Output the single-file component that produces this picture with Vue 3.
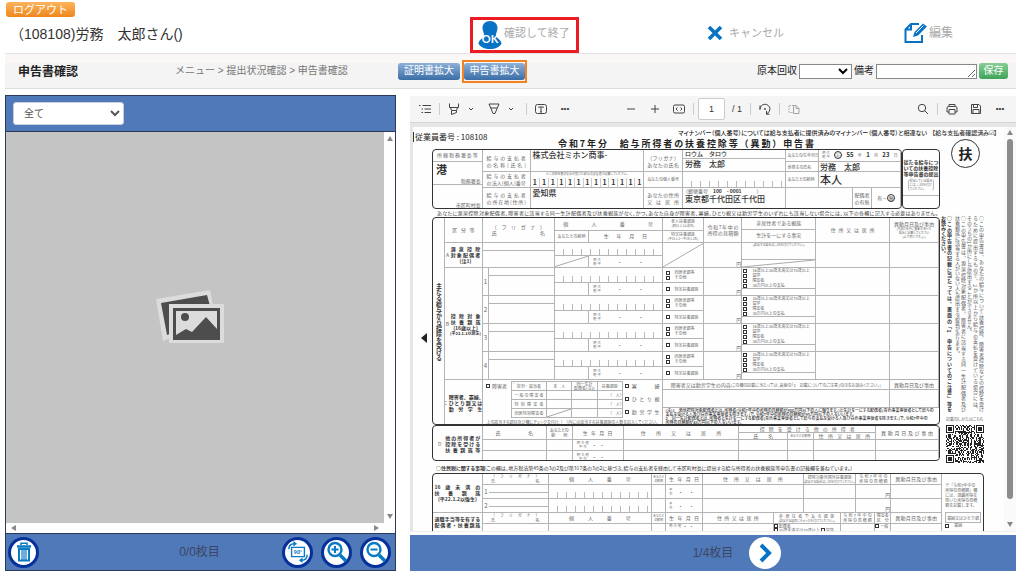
<script setup>
import { ref } from 'vue'

const filter = ref('all')
const collected = ref('')
const memo = ref('')
const page = ref('1')

const dependents = [1, 2, 3, 4]
const abroadReasons = ['16歳以上30歳未満又は70歳以上', '留学', '障害者', '38万円以上の支払']
const disability = ['一般の障害者', '特別障害者', '同居特別障害者']
const statuses = ['寡婦', 'ひとり親', '勤労学生']
const corporateNumber = '1111111111111'.split('')

const size = 33
function finder(x, y, ox, oy) {
  const dx = x - ox
  const dy = y - oy
  if (dx < -1 || dy < -1 || dx > 7 || dy > 7) return null
  if (dx < 0 || dy < 0 || dx > 6 || dy > 6) return false
  const d = Math.max(Math.abs(dx - 3), Math.abs(dy - 3))
  return d !== 2
}
let code = ''
let seed = 77
for (let y = 0; y < size; y++) {
  for (let x = 0; x < size; x++) {
    seed = (seed * 1103515245 + 12345) % 2147483648
    const f = [finder(x, y, 0, 0), finder(x, y, size - 7, 0), finder(x, y, 0, size - 7)].find((v) => v !== null)
    const on = f === undefined ? (seed >> 12) % 2 === 0 : f
    if (on) code += `M${x} ${y}h1v1h-1z`
  }
}
</script>

<template>
  <div class="app">
    <header class="top">
      <button class="logout" type="button">ログアウト</button>
      <div class="actions">
        <p class="user">（108108)労務　太郎さん()</p>
        <div>
          <button class="act finish" type="button">
            <svg width="24" height="28" viewBox="0 0 24 28">
              <path fill="#0872c4" d="M12 0c4.500 0 7.500 3 7.500 7 0 3-1.500 4.500-1.500 7 0 3.500 5 4 5.500 8.500C22 26 17.500 28 12 28S2 26 .5 22.500C1 18 6 17.500 6 14c0-2.500-1.500-4-1.500-7 0-4 3-7 7.500-7z" />
              <text x="12" y="22" text-anchor="middle" font-family="Lato, sans-serif" font-weight="bold" font-size="11" fill="#fff">OK</text>
            </svg>
            確認して終了
          </button>
        </div>
        <div>
          <button class="act cancel" type="button">
            <svg width="16" height="16" viewBox="0 0 16 16"><path d="M2 2l12 12M14 2L2 14" stroke="#0872c4" stroke-width="3.600" /></svg>
            キャンセル
          </button>
        </div>
        <div>
          <button class="act edit" type="button">
            <svg width="24" height="22" viewBox="0 0 24 22" fill="none">
              <path d="M15 2H7L1.500 7.500V20H18v-7M7 2v5.500H1.500" stroke="#0872c4" stroke-width="2" />
              <path d="M9 15l1.500-5L19 1.500l4 3L14 13.500z" fill="#0872c4" />
              <path d="M12 11l7.500-7.500" stroke="#fff" />
            </svg>
            編集
          </button>
        </div>
      </div>
    </header>

    <div class="titlebar">
      <h1>申告書確認</h1>
      <nav>メニュー &gt; 提出状況確認 &gt; 申告書確認</nav>
      <button class="blue" type="button">証明書拡大</button>
      <span class="picked"><button class="blue" type="button">申告書拡大</button></span>
      <form class="meta" @submit.prevent>
        <label for="collected">原本回収</label>
        <select id="collected" v-model="collected"><option value=""></option></select>
        <label for="memo">備考</label>
        <textarea id="memo" v-model="memo" rows="1"></textarea>
        <button class="save" type="submit">保存</button>
      </form>
    </div>

    <main class="work">
      <section class="proof">
        <div class="proof-head">
          <select v-model="filter" aria-label="絞り込み"><option value="all">全て</option></select>
        </div>
        <div class="proof-view">
          <div class="canvas">
            <svg width="70" height="58" viewBox="0 0 70 58">
              <path d="M0 9L54 0l4 20-44 28-7 3z" fill="#dcdcdc" />
              <path d="M5 13l46-8 3 11-40 2v26l-3 1z" fill="#4d4d4d" />
              <path d="M13 14h55v39H13z" fill="#dcdcdc" />
              <path d="M17 18h47v32H17z" fill="#4d4d4d" />
              <path d="M20 21h41v18L50 27 36 42l-6-3-10 6z" fill="#dcdcdc" />
              <circle cx="29" cy="27" r="4" fill="#4d4d4d" />
            </svg>
          </div>
          <div class="vbar"><i class="up"></i><i class="down"></i></div>
          <div class="hbar"><i class="left"></i><i class="right"></i></div>
        </div>
        <footer class="foot">
          <button class="round" type="button" aria-label="削除">
            <svg width="16" height="20" viewBox="0 0 16 20" fill="none" stroke="#0a7ac4"><path d="M1 4.500h14" stroke-width="2.500" /><path d="M5 3V1.200h6V3" stroke-width="1.500" /><path d="M3 7v11.500h10V7z" stroke-width="2" /><path d="M6 7v11M8 7v11M10 7v11" stroke-width="1.200" /></svg>
          </button>
          <span class="count">0/0枚目</span>
          <span class="tools">
            <button class="round" type="button" aria-label="回転">
              <svg width="22" height="22" viewBox="0 0 24 24" fill="none" stroke="#0a7ac4">
                <path d="M5 7h14v10H5z" stroke-width="1.500" />
                <text x="12" y="14" text-anchor="middle" font-family="Roboto, sans-serif" font-weight="bold" font-size="6" fill="#0a7ac4" stroke="none">90°</text>
                <path d="M2 9c0-4 2-6 6-6M22 15c0 4-2 6-6 6" stroke-width="1.600" />
                <path d="M7 0l4 3-4 3zM17 18l-4 3 4 3z" fill="#0a7ac4" stroke="none" />
              </svg>
            </button>
            <button class="round" type="button" aria-label="拡大">
              <svg width="22" height="22" viewBox="0 0 22 22" fill="none" stroke="#0a7ac4" stroke-width="2.400"><circle cx="9" cy="8.500" r="6.500" /><path d="M14 14l6 6" stroke-width="3.600" /><path d="M5.500 8.500h7M9 5v7" stroke-width="2" /></svg>
            </button>
            <button class="round" type="button" aria-label="縮小">
              <svg width="22" height="22" viewBox="0 0 22 22" fill="none" stroke="#0a7ac4" stroke-width="2.400"><circle cx="9" cy="8.500" r="6.500" /><path d="M14 14l6 6" stroke-width="3.600" /><path d="M5.500 8.500h7" stroke-width="2" /></svg>
            </button>
          </span>
        </footer>
      </section>

      <section class="report">
        <div class="toolbar">
          <button type="button" aria-label="目次"><svg width="12" height="12" viewBox="0 0 12 12"><path d="M3.500 2.500H12M5.500 6H12M5.500 9.500H12M0 2.500h1.500M2.500 6H4M2.500 9.500H4" /></svg></button>
          <hr />
          <button type="button" aria-label="強調表示"><svg width="12" height="12" viewBox="0 0 12 12"><path d="M1.500 .5v4h9v-4M2.500 4.500l1 3h5l1-3M3.500 7.500v4l5-2v-2" /></svg></button>
          <button class="chev" type="button" aria-label="強調色"><svg width="6" height="6" viewBox="0 0 6 6"><path d="M1 2l2 2 2-2" /></svg></button>
          <button type="button" aria-label="描画"><svg width="12" height="12" viewBox="0 0 12 12"><path d="M1 1h10L7 10.500H5zM3 5h6" /></svg></button>
          <button class="chev" type="button" aria-label="ペン色"><svg width="6" height="6" viewBox="0 0 6 6"><path d="M1 2l2 2 2-2" /></svg></button>
          <hr />
          <button type="button" aria-label="テキスト"><svg width="12" height="12" viewBox="0 0 12 12"><rect x=".5" y="1.500" width="11" height="9" rx="2" /><path d="M3.500 4.500V4h5v.5M6 4v5M5 9h2" /></svg></button>
          <button class="more" type="button" aria-label="その他">•••</button>
          <span class="mid">
            <button type="button" aria-label="縮小表示"><svg width="12" height="12" viewBox="0 0 12 12"><path d="M2 6h8" /></svg></button>
            <button type="button" aria-label="拡大表示"><svg width="12" height="12" viewBox="0 0 12 12"><path d="M2 6h8M6 2v8" /></svg></button>
            <button type="button" aria-label="幅に合わせる"><svg width="12" height="12" viewBox="0 0 12 12"><rect x=".5" y="2" width="11" height="8" rx="1.500" /><path d="M4.500 4.500L3 6l1.500 1.500M7.500 4.500L9 6 7.500 7.500" /></svg></button>
            <hr />
            <input v-model="page" aria-label="ページ" />
            <span class="total">/ 1</span>
            <hr />
            <button type="button" aria-label="回転"><svg width="12" height="12" viewBox="0 0 12 12"><path d="M1 6.500A5 5 0 0 1 11 6q0 3-3.500 5M7.500 8v3.200h3M1 2.500v4" /><circle cx="6" cy="6" r=".6" /></svg></button>
            <hr />
            <button class="off" type="button" aria-label="見開き"><svg width="12" height="12" viewBox="0 0 12 12"><path d="M5.500 2.500H1v7h4.500" stroke-dasharray="1.500 1" /><path d="M5.500 2.500v8h5.500v-5L8 2.500zM8 2.500v3h3" /></svg></button>
          </span>
          <span class="end">
            <button type="button" aria-label="検索"><svg width="12" height="12" viewBox="0 0 12 12"><circle cx="5" cy="5" r="3.700" /><path d="M7.500 7.500l3.500 3.500" /></svg></button>
            <hr />
            <button type="button" aria-label="印刷"><svg width="12" height="12" viewBox="0 0 12 12"><path d="M3 3.500V1.500h6v2M3 9H1V5q0-1.500 1.500-1.500h7Q11 3.500 11 5v4H9M3 6.500h6V11H3z" /></svg></button>
            <button type="button" aria-label="保存"><svg width="12" height="12" viewBox="0 0 12 12"><path d="M1.500 1.500h7.500l1.500 1.500v7.500h-9zM3.500 1.500v3h4v-3M3 10.500v-4h6v4" /></svg></button>
            <button class="more" type="button" aria-label="設定">•••</button>
          </span>
        </div>

        <div class="viewer">
          <article class="sheet">
            <header class="sheet-head">
              <span class="emp">従業員番号 : 108108</span>
              <span class="confirm">マイナンバー（個人番号）については給与支払者に提供済みのマイナンバー（個人番号）と相違ない<b>【給与支払者確認済み☑】</b></span>
              <strong class="form-title">令和7年分　給与所得者の扶養控除等（異動）申告書</strong>
            </header>

            <div class="sheet-body">
              <div class="nudge"><i></i></div>
              <div class="forms">
                <div class="ident">
                  <div class="box ident-main">
                    <div class="col office">
                      <div class="c"><span class="j">所轄税務署長等</span></div>
                      <div class="c stack"><b class="big">港</b><span class="end-text">税務署長</span></div>
                      <div class="c stack"><span class="end-text low">市区町村長</span></div>
                    </div>
                    <div class="col three">
                      <div class="c two"><span class="j">給与の支払者</span><span class="j">の名称(氏名)</span></div>
                      <div class="c two"><span class="j">給与の支払者</span><span class="j">の法人(個人)番号</span></div>
                      <div class="c two"><span class="j">給与の支払者</span><span class="j">の所在地(住所)</span></div>
                    </div>
                    <div class="col three">
                      <div class="c top-text"><b class="fill">株式会社ミホン商事-</b></div>
                      <div class="c number">
                        <small>※この申告書の提出を受けた給与の支払者が記載してください。</small>
                        <div class="digits"><b v-for="(n, i) in corporateNumber" :key="i">{{ n }}</b></div>
                      </div>
                      <div class="c top-text"><b class="fill">愛知県</b></div>
                    </div>
                    <div class="col three">
                      <div class="c two"><span class="j">（フリガナ）</span><span class="j">あなたの氏名</span></div>
                      <div class="c tiny"><span class="j">あなたの個人番号</span></div>
                      <div class="c two"><span class="j">あなたの住所</span><span class="j">又は居所</span></div>
                    </div>
                    <div class="col four">
                      <div class="c"><b class="kana">ロウム　タロウ</b></div>
                      <div class="c top-text"><b class="fill">労務　太郎</b></div>
                      <div class="c ticks"></div>
                      <div class="c stack addr"><span>（郵便番号　<b>100　- 0001</b>　　　）</span><b class="fill">東京都千代田区千代田</b></div>
                    </div>
                    <div class="col person">
                      <div class="c pair"><span>あなたの生年月日</span><span class="birth"><small>明・大<br />昭・平</small><i class="ring">㋹</i><b>55</b>年<b>1</b>月<b>23</b>日</span></div>
                      <div class="c pair"><span>世帯主の氏名</span><b class="fill">労務　太郎</b></div>
                      <div class="c pair"><span>あなたとの続柄</span><b class="self">本人</b></div>
                      <div class="c spouse"><span></span><span class="spouse-label">配偶者<br />の有無</span><span class="yesno">有・<i class="ring">無</i></span></div>
                    </div>
                  </div>
                  <div class="box second">
                    <b>従たる給与につ<br />いての扶養控除<br />等申告書の提出</b>
                    <small>提出している場合<br />には、○印を付け<br />てください。</small>
                  </div>
                </div>

                <p class="notice">あなたに源泉控除対象配偶者、障害者に該当する同一生計配偶者及び扶養親族がなく、かつ、あなた自身が障害者、寡婦、ひとり親又は勤労学生のいずれにも該当しない場合には、以下の各欄に記入する必要はありません。</p>

                <div class="box family">
                  <div class="spine">主たる給与から控除を受ける</div>
                  <div>
                    <div class="sec">
                      <div class="c"><span class="j wide">区分等</span></div>
                      <div class="r head">
                        <div class="c two name"><span class="j">（フリガナ）</span><span class="j">氏名</span></div>
                        <div class="c nums">
                          <div class="c"><span class="j">個人番号</span></div>
                          <div class="split"><span class="c tiny">あなたとの続柄</span><span class="c"><span class="j wide">生年月日</span></span></div>
                        </div>
                        <div class="c halves tiny"><span class="c lines">老人扶養親族<small>(昭31.1.1以前生)</small></span><span class="lines">特定扶養親族<small>(平15.1.2～平19.1.1生)</small></span></div>
                        <div class="c two"><span class="j">令和7年中の</span><span class="j">所得の見積額</span></div>
                        <div class="c halves"><span class="c">非居住者である親族</span><span>生計を一にする事実</span></div>
                        <div class="c"><span class="j wide">住所又は居所</span></div>
                        <div class="c two"><span class="j">異動月日及び事由</span><small>(令和7年中に異動があった<br />場合に記載してください<br />(以下同じです。)。)</small></div>
                      </div>
                    </div>
                    <div class="sec">
                      <div class="c label"><span>A</span><b><span class="j">源泉控除</span><span class="j">対象配偶者</span><span>(注1)</span></b></div>
                      <div class="r rowa">
                        <div class="c"><div class="ruby"></div></div>
                        <div class="c nums"><div class="c ticks"></div><div class="split"><span class="c"><svg class="diag" viewBox="0 0 100 100" preserveAspectRatio="none"><path d="M0 100L100 0" /></svg></span><span class="era"><small>明・大<br />昭・平</small><i>・</i><i>・</i></span></div></div>
                        <div class="c"><svg class="diag" viewBox="0 0 100 100" preserveAspectRatio="none"><path d="M0 100L100 0" /></svg></div>
                        <div class="c yen">円</div>
                        <div class="c fact"><small>(該当する場合は○印を付けてください。)</small><svg class="diag" viewBox="0 0 100 100" preserveAspectRatio="none"><path d="M0 100L100 0" /></svg></div>
                        <div class="c"></div>
                        <div class="c"></div>
                      </div>
                    </div>
                    <div class="sec">
                      <div class="c label"><span>B</span><b><span class="j">控除対象</span><span class="j">扶養親族</span><span>(16歳以上)</span><small>(平22.1.1以前生)</small></b></div>
                      <div>
                        <div v-for="n in dependents" :key="n" class="r rowb">
                          <div class="c numbered"><span class="c">{{ n }}</span><div class="ruby"></div></div>
                          <div class="c nums"><div class="c ticks"></div><div class="split"><span class="c"></span><span class="era"><small>明・大<br />昭・平</small><i>・</i><i>・</i></span></div></div>
                          <div class="c halves checks">
                            <span class="c"><label><input type="checkbox" />同居老親等</label><label><input type="checkbox" />その他</label></span>
                            <span><label><input type="checkbox" />特定扶養親族</label></span>
                          </div>
                          <div class="c yen">円</div>
                          <div class="c"><div class="abroad checks"><label v-for="t in abroadReasons" :key="t"><input type="checkbox" />{{ t }}</label></div></div>
                          <div class="c"></div>
                          <div class="c"></div>
                        </div>
                      </div>
                    </div>
                    <div class="sec rowc">
                      <div class="c label"><span>C</span><b><span class="j">障害者、寡婦、</span><span class="j">ひとり親又は</span><span class="j">勤労学生</span></b></div>
                      <div class="status">
                        <div class="c status-left">
                          <div class="status-main">
                            <label class="tickable"><input type="checkbox" />障害者</label>
                            <table>
                              <tbody>
                                <tr><th class="slash-down">区分　該当者</th><th>本　人</th><th>同一生計<br />配偶者(注2)</th><th>扶養親族</th></tr>
                                <tr v-for="(d, i) in disability" :key="d"><td><span class="j">{{ d }}</span></td><td><svg v-if="i === 2" class="diag" viewBox="0 0 100 100" preserveAspectRatio="none"><path d="M0 100L100 0" /></svg></td><td></td><td class="people">（　人）</td></tr>
                              </tbody>
                            </table>
                            <div class="statuses"><label v-for="s in statuses" :key="s"><input type="checkbox" /><span class="j">{{ s }}</span></label></div>
                          </div>
                          <small>上の該当する項目及び欄にチェックを付け、（　）内には該当する扶養親族の人数を記入してください。</small>
                        </div>
                        <div class="detail">
                          <div class="detail-head"><span class="c">障害者又は勤労学生の内容<small>(この欄の記載に当たっては、裏面の「2　記載についてのご注意」の⑶をお読みください。)</small></span><span class="c">異動月日及び事由</span></div>
                          <div class="detail-head"><span class="c"></span><span class="c"></span></div>
                          <b>(注)1　源泉控除対象配偶者とは、所得者(令和7年中の所得の見積額が900万円以下の人に限ります。)と生計を一にする配偶者(青色事業専従者として給与の<br />支払を受ける人及び白色事業専従者を除きます。)で、令和7年中の所得の見積額が95万円以下の人をいいます。<br />2　同一生計配偶者とは、所得者と生計を一にする配偶者(青色事業専従者として給与の支払を受ける人及び白色事業専従者を除きます。)で、令和7年中の<br />所得の見積額が48万円以下の人をいいます。</b>
                        </div>
                      </div>
                    </div>
                  </div>
                </div>

                <div class="box others">
                  <div class="c label"><span>D</span><b><span class="j">他の所得者が</span><span class="j">控除を受ける</span><span class="j">扶養親族等</span></b></div>
                  <div>
                    <div class="d-row">
                      <span class="c"><span class="j wide">氏名</span></span><span class="c tiny">あなたとの<br />続　　柄</span><span class="c"><span class="j wide">生年月日</span></span><span class="c"><span class="j address">住所又は居所</span></span>
                      <div class="c halves taxpayer"><span class="c"><span class="j address">控除を受ける他の所得者</span></span><div class="tax-cols"><span class="c">氏　　名</span><span class="c"><small>あなたとの続柄</small></span><span><span class="j">住所又は居所</span></span></div></div>
                      <span class="c"><span class="j">異動月日及び事由</span></span>
                    </div>
                    <div v-for="n in 2" :key="n" class="d-row entry">
                      <span class="c"></span><span class="c"></span><span class="c era"><small>明・大・昭<br />平・令</small><i>・</i><i>・</i></span><span class="c"></span>
                      <div class="c tax-cols"><span class="c"></span><span class="c"></span><span></span></div><span class="c"></span>
                    </div>
                  </div>
                </div>
              </div>

              <aside class="side">
                <div class="seal">扶</div>
                <div class="guide">
                  <p><span class="full">○この申告書は、あなたの給与について扶養控除、障害者控除などの控除を受け</span><span class="full">るために提出するもので、2か所以上から給与の支払を受けている場合には、</span><span>そのうちの1か所にしか提出することができません。</span></p>
                  <p><span class="full">○この申告書は、源泉控除対象配偶者、障害者に該当する同一生計配偶者及び</span><span>扶養親族に該当する人がいない人も提出する必要があります。</span></p>
                  <p class="strong"><span class="full">○この申告書の記載に当たっては、裏面の「1　申告についてのご注意」等を</span><span>お読みください。</span></p>
                </div>
                <small>記載のしかたはこちら</small>
                <svg class="qr" :viewBox="`0 0 ${size} ${size}`" shape-rendering="crispEdges"><path :d="code" fill="#222" /></svg>
              </aside>
            </div>

            <p class="resident"><b>○住民税に関する事項</b>(この欄は、地方税法第45条の3の2及び第317条の3の2に基づき、給与の支払者を経由して市区町村長に提出する給与所得者の扶養親族等申告書の記載欄を兼ねています。)</p>

            <div class="box local">
              <div class="l-label">
                <div class="c"><b><span class="j">16歳未満の</span><span class="j">扶養親族</span><span>(平22.1.2以後生)</span></b></div>
                <div class="c"><b><span class="j">退職手当等を有する</span><span class="j">配偶者・扶養親族</span></b></div>
              </div>
              <div>
                <div class="l-row">
                  <span class="c two name"><span class="j">（フリガナ）</span><span class="j">氏名</span></span><span class="c"><span class="j wide">個人番号</span></span><span class="c rel"><small>あなたと<br />の続柄</small></span><span class="c"><span class="j">生年月日</span></span><span class="c"><span class="j wide">住所又は居所</span></span><span class="c two"><span class="j">控除対象外国外扶養親族</span><small>(該当する場合は○印を付けてください。)</small></span><span class="c two"><span class="j">令和7年中の</span><span class="j">所得の見積額</span></span><span class="c"><span class="j">異動月日及び事由</span></span>
                </div>
                <div v-for="n in 2" :key="n" class="l-row entry">
                  <span class="c numbered"><span>{{ n }}</span><i class="ruby"></i></span><span class="c ticks"></span><span class="c"></span><span class="c era"><small>平<br />令</small><i>・</i><i>・</i></span><span class="c"></span><span class="c"></span><span class="c yen">円</span><span class="c"></span>
                </div>
                <div class="l-row last">
                  <span class="c two name"><span class="j">（フリガナ）</span><span class="j">氏名</span></span><span class="c"><span class="j wide">個人番号</span></span><span class="c rel"><small>あなたと<br />の続柄</small></span><span class="c"><span class="j">生年月日</span></span><span class="c"><span class="j wide">住所又は居所</span></span><span class="c two"><span class="j">非居住者である親族</span><small>(該当する項目にチェックを付けてください。)</small></span><span class="c two"><span class="j">令和7年中の</span><span class="j">所得の見積額</span></span><span class="c tiny">障害者<br />区　分</span><span class="c"><span class="j">異動月日及び事由</span></span>
                </div>
                <div class="l-row last entry">
                  <span class="c"><i class="ruby"></i></span><span class="c"></span><span class="c"></span><span class="c era"><small>明・大・昭</small><i>・</i><i>・</i></span><span class="c"></span><span class="c checks"><label><input type="checkbox" />配偶者</label><label><input type="checkbox" />30歳未満又は70歳以上 <input type="checkbox" />留学</label></span><span class="c"></span><span class="c checks"><label><input type="checkbox" />一般</label></span><span class="c"></span>
                </div>
              </div>
              <div class="l-side">
                <p>※「令和7年中の<br />所得の見積額」欄<br />には、退職所得を<br />除いた所得の見積<br />額を記載します。</p>
                <div><span class="c">寡婦又はひとり親</span><span class="checks"><label><input type="checkbox" />寡婦</label></span></div>
              </div>
            </div>
          </article>
          <div class="thumb-track"><i class="up"></i><b></b><i class="down"></i></div>
        </div>
        <footer class="foot pager">
          <span>1/4枚目</span>
          <button type="button" aria-label="次へ"><svg width="32" height="32" viewBox="0 0 32 32"><path d="M12 8l8 8-8 8" fill="none" stroke="#0872c4" stroke-width="4" /></svg></button>
        </footer>
      </section>
    </main>
  </div>
</template>

<style>
html, body { margin: 0; background: #fff; }
</style>

<style scoped>
* { box-sizing: border-box; }
.app { display: flex; flex-direction: column; height: 100vh; padding-bottom: 3px; font-family: "Liberation Sans", "Noto Sans CJK JP", sans-serif; color: #333; overflow: hidden; }
button, select, input, textarea { font-family: inherit; margin: 0; }
p, h1 { margin: 0; }
i { font-style: normal; }

.top { padding-top: 2px; }
.logout { display: block; margin-left: 6px; width: 69px; height: 15px; padding: 0; border: 0; border-radius: 3px; background: linear-gradient(#fcb45c, #f0861c); color: #fff; font-size: 11px; line-height: 14px; }
.actions { display: grid; grid-template-columns: 470fr 237fr 197fr 120fr; height: 36px; }
.user { padding-left: 10px; font-size: 14px; line-height: 34px; }
.act { display: flex; align-items: center; padding: 0; border: 0; background: none; color: #aaa; font-size: 11px; line-height: 16px; height: 30px; white-space: nowrap; }
.finish { height: 36px; width: 109px; gap: 2px; padding: 0 0 4px 5px; border: 3px solid #ec1c24; }
.finish svg { margin-top: 4px; }
.cancel { gap: 6px; height: 32px; }
.edit { gap: 1px; font-size: 12px; height: 32px; }

.titlebar { display: flex; align-items: center; height: 36px; margin: 0 8px 0 5px; padding: 0 8px 0 13px; border-top: 1px solid #e2e2e2; border-bottom: 1px solid #ddd; background: linear-gradient(#faf7f6 9px, #f4f4f4 9px); }
h1 { flex: 0 0 157px; padding-top: 2px; font-size: 12px; line-height: 16px; color: #222; }
nav { flex: 0 0 223px; font-size: 10px; line-height: 14px; color: #777; white-space: nowrap; }
.blue { height: 17px; width: 62px; padding: 0; border: 0; border-radius: 3px; background: linear-gradient(#8db1d8, #3a6da6); color: #fff; font-size: 10px; line-height: 14px; }
.picked { display: flex; margin-left: 2px; border: 2px solid #f58220; padding: 1px 0; }
.picked .blue { width: 61px; }
.meta { display: flex; align-items: center; gap: 2px; margin-left: auto; font-size: 10px; line-height: 14px; color: #222; }
.meta select { width: 53px; height: 15px; padding: 0; border: 1px solid #888; border-radius: 0; background: #fff; }
.meta textarea { width: 101px; height: 15px; padding: 0; border: 1px solid #888; resize: both; overflow-y: scroll; font-size: 10px; }
.save { width: 29px; height: 16px; padding: 0; border: 0; border-radius: 3px; background: linear-gradient(#86cd94, #3fa45a); color: #fff; font-size: 10px; line-height: 14px; }

.work { flex: 1; min-height: 0; display: grid; grid-template-columns: 391fr 606fr; gap: 14px; margin: 6px 8px 0 5px; }
.proof { display: flex; flex-direction: column; min-height: 0; border: 1px solid #2c3a58; }
.proof-head { padding: 6px 7px; height: 36px; background: #5079b9; border-bottom: 1px solid #2c3a58; }
.proof-head select { width: 111px; height: 23px; padding: 0 0 0 6px; border: 1px solid #ccd; border-radius: 3px; background: #fff; color: #555; font-size: 10px; }
.proof-view { flex: 1; min-height: 0; display: grid; grid-template-columns: 1fr 11px; grid-template-rows: 1fr 10px; background: #fefefe; }
.canvas { display: flex; align-items: center; justify-content: center; background: #c4c4c4; padding: 0 8px 18px 0; }
.vbar { display: flex; flex-direction: column; align-items: center; justify-content: space-between; padding: 4px 0; }
.hbar { display: flex; align-items: center; justify-content: space-between; padding: 0 5px; }
.up, .down, .left, .right { width: 0; height: 0; border: 3px solid transparent; }
.up { border-bottom: 5px solid #888; border-top: 0; }
.down { border-top: 5px solid #888; border-bottom: 0; }
.left { border-right: 5px solid #888; border-left: 0; }
.right { border-left: 5px solid #888; border-right: 0; }
.foot { display: grid; grid-template-columns: 1fr auto 1fr; align-items: center; flex: 0 0 37px; background: #5079b9; border-top: 1px solid #2c3a58; padding: 0 4px 0 2px; color: #3c4662; font-size: 12px; }
.round { display: flex; align-items: center; justify-content: center; width: 31px; height: 31px; padding: 0; border: 3px solid #06319a; border-radius: 50%; background: #fff; }
.tools { display: flex; justify-content: flex-end; gap: 8px; }
.count { padding-bottom: 3px; }
.report { display: flex; flex-direction: column; min-width: 0; min-height: 0; padding-top: 1px; }
.pager { display: flex; justify-content: center; gap: 16px; flex-basis: 36px; border: 0; padding: 0 0 0 48px; }
.pager button { width: 32px; height: 32px; padding: 0; border: 0; border-radius: 50%; background: #fff; }
.pager span { padding-bottom: 4px; }

.toolbar { display: flex; align-items: center; flex: 0 0 27px; padding: 0 10px 0 9px; background: #f5f5f5; border-bottom: 1px solid #d6d6d6; }
.toolbar button { display: flex; padding: 0; border: 0; background: none; color: #333; }
.toolbar svg { fill: none; stroke: #444; stroke-width: 1; }
.toolbar hr { width: 1px; height: 12px; margin: 0 8px; border: 0; background: #ccc; }
.toolbar .chev { margin: 0 14px 0 8px; }
.toolbar .chev + hr { margin-left: -2px; }
.toolbar .more { font-size: 8px; line-height: 10px; width: 12px; justify-content: center; margin-left: 12px; }
.mid { display: flex; align-items: center; margin-left: 54px; }
.mid button + button { margin-left: 12px; }
.mid input { width: 27px; height: 22px; margin-left: -4px; padding: 0; border: 1px solid #ccc; border-radius: 2px; text-align: center; font-size: 9px; background: #fff; color: #333; }
.total { margin-left: 7px; font-size: 9px; }
.mid .off { opacity: .45; }
.end { display: flex; align-items: center; margin-left: auto; }
.end button + button { margin-left: 12px; }

.viewer { flex: 1; min-height: 0; display: grid; grid-template-columns: 1fr 12px; margin-bottom: 3px; padding: 4px 0 0 3px; background: #e6e6e6; overflow: hidden; border-bottom: 1px solid #eee; }
.thumb-track { display: flex; flex-direction: column; align-items: center; justify-content: space-between; background: #fafafa; padding: 3px 0 4px; }
.thumb-track b { flex: 0 1 360px; width: 6px; margin: 4px 0 auto; border-radius: 3px; background: #8c8c8c; }

.sheet { min-height: 0; min-width: 0; overflow: hidden; background: #fefefe; color: #666; font-size: 5px; line-height: 6px; font-family: "Noto Sans CJK JP", sans-serif; }
.sheet b { color: #333; }
.sheet small { font-size: 3px; line-height: 4px; font-feature-settings: "palt"; }
.sheet-head { display: grid; grid-template-columns: 145fr 256fr 190fr; grid-template-rows: 11px 11px; align-items: center; color: #222; }
.emp { grid-row: span 2; padding-left: 1px; font-size: 8px; line-height: 10px; white-space: nowrap; border-left: 1px solid #333; height: 10px; margin: 0 auto 2px 0; }
.confirm { grid-column: span 2; justify-self: end; padding-right: 7px; font-size: 6px; line-height: 8px; font-feature-settings: "palt"; white-space: nowrap; font-weight: 500; }
.confirm b { margin-left: 5px; font-weight: 500; }
.form-title { grid-column: 2; font-size: 9px; line-height: 10px; text-align-last: justify; white-space: nowrap; }
.sheet-body { display: grid; grid-template-columns: 19fr 508fr 64fr; }
.sheet-body > *, .forms > * { min-width: 0; }
.nudge { padding: 184px 5px 0 0; display: flex; justify-content: flex-end; align-items: flex-start; }
.nudge i { border: 5px solid transparent; border-left: 0; border-right: 6px solid #222; }

.box { border: 1px solid #333; border-radius: 4px; overflow: hidden; }
.c { display: flex; align-items: center; justify-content: center; min-width: 0; min-height: 0; overflow: hidden; border-right: 1px solid #b4b4b4; border-bottom: 1px solid #b4b4b4; text-align: center; white-space: nowrap; }
.j { display: block; flex: 0 1 84%; width: 84%; text-align-last: justify; }
.j.wide { flex-basis: 60%; width: 60%; }
.tiny { font-size: 4px; line-height: 5px; }
.two { flex-direction: column; }
.two .j { flex: 0 0 auto; }
.name .j { width: 75%; }
.lines { display: flex; flex-direction: column; align-items: center; justify-content: center; }
.diag { display: block; width: 100%; height: 100%; fill: none; stroke: #aaa; stroke-width: 1px; }
.diag path { vector-effect: non-scaling-stroke; }
.slash-down { background: linear-gradient(to bottom left, transparent 48%, #ccc 50%, transparent 52%); }
.ticks { background: repeating-linear-gradient(to right, transparent 0 8px, #bbb 8px 9px) left bottom / 100% 6px no-repeat; }

.ident { display: grid; grid-template-columns: 470fr 38fr; height: 60px; }
.ident-main { display: grid; grid-template-columns: 50fr 48fr 114fr 39fr 104fr 115fr; }
.ident-main > .col { display: grid; min-width: 0; min-height: 0; }
.col > .c:last-child { border-bottom: 0; }
.office { grid-template-rows: 12fr 24fr 24fr; }
.three { grid-template-rows: 23fr 16fr 21fr; }
.four { grid-template-rows: 9fr 14fr 16fr 21fr; }
.person { grid-template-rows: 12fr 11fr 16fr 21fr; }
.three .two { line-height: 7px; }
.stack { flex-direction: column; align-items: flex-start; justify-content: space-between; }
.big { font-size: 11px; line-height: 14px; padding-left: 3px; }
.end-text { align-self: flex-end; padding-right: 1px; }
.end-text.low { margin-top: auto; }
.top-text { align-items: flex-start; justify-content: flex-start; }
.fill { font-size: 8px; line-height: 10px; padding-left: 2px; font-weight: 500; }
.number { flex-direction: column; justify-content: space-between; }
.digits { display: grid; grid-template-columns: repeat(13, 1fr); align-self: stretch; font-size: 7px; line-height: 9px; }
.digits b + b { border-left: 1px solid #ccc; }
.kana { flex: 1; padding-left: 2px; text-align: left; font-size: 6px; line-height: 8px; font-weight: 500; }
.addr { justify-content: flex-start; }
.pair, .spouse { display: grid; }
.pair { grid-template-columns: 32fr 83fr; font-size: 4px; text-align: left; font-feature-settings: "palt"; }
.pair > * { padding-left: 1px; min-width: 0; }
.pair > :last-child { border-left: 1px solid #b4b4b4; align-self: stretch; }
.birth { display: flex; align-items: center; justify-content: space-around; }
.birth b { font-size: 6px; }
.ring { display: inline-block; width: 8px; height: 8px; border: 1px solid #333; border-radius: 50%; text-align: center; color: #333; font-size: 5px; line-height: 6px; }
.self { font-size: 11px; line-height: 14px; font-weight: 500; }
.spouse { grid-template-columns: 66fr 21fr 28fr; }
.spouse-label { border: 1px solid #b4b4b4; border-width: 0 1px; line-height: 7px; align-self: stretch; padding-top: 3px; }
.second { display: flex; flex-direction: column; align-items: center; padding-top: 9px; white-space: nowrap; background: linear-gradient(#b4b4b4, #b4b4b4) 0 45px / 100% 1px no-repeat; }
.second b { font-size: 5px; line-height: 6px; }
.second small { margin-top: 2px; padding: 0 1px; border: 1px solid #bbb; border-width: 0 1px; border-radius: 3px; }
.notice { height: 8px; padding: 0 2px 0 5px; line-height: 8px; text-align-last: justify; white-space: nowrap; color: #444; font-feature-settings: "palt"; }

.family { display: grid; grid-template-columns: 12fr 495fr; height: 208px; }
.family > * { min-width: 0; }
.spine { display: flex; align-items: center; justify-content: center; writing-mode: vertical-rl; font-size: 6px; font-weight: bold; color: #333; border-right: 1px solid #b4b4b4; }
.sec { display: grid; grid-template-columns: 38fr 457fr; }
.sec > * { min-width: 0; }
.r { display: grid; grid-template-columns: 72fr 108fr 42fr 38fr 74fr 74fr 49fr; }
.head { height: 25px; }
.rowa { height: 25px; }
.rowb { height: 28px; }
.nums { flex-direction: column; align-items: stretch; }
.nums > * { flex: 1; }
.nums > .c { border-right: 0; }
.split { display: grid; grid-template-columns: 35fr 73fr; min-height: 0; }
.split > .c { border-bottom: 0; }
.split > .c:last-child { border-right: 0; }
.nums > .c.ticks { flex: 0 0 56%; }
.halves { flex-direction: column; align-items: stretch; }
.halves > * { flex: 1; }
.halves > .c { border-right: 0; }
.head .halves:not(.tiny) > :last-child { padding-top: 2px; }
.label { gap: 1px; padding: 0 1px; }
.label b { flex: 1; display: flex; flex-direction: column; align-items: center; }
.label b .j { flex: none; width: 96%; }
.label b small { font-size: 4px; }
.ruby { align-self: flex-start; flex: 1; height: 8px; border-bottom: 1px solid #b4b4b4; }
.numbered > span { flex: 0 0 6px; align-self: stretch; border-bottom: 0; display: flex; align-items: center; font-size: 6px; justify-content: center; }
.yen { align-items: flex-end; justify-content: flex-end; }
.era { display: flex; align-items: center; justify-content: space-between; padding: 0 18px 0 4px; }
.fact { flex-direction: column; justify-content: space-between; }
.fact .diag { height: 8px; border-top: 1px solid #b4b4b4; }
.checks { text-align: left; font-size: 4px; line-height: 5px; }
.checks label { display: flex; align-items: center; gap: 5px; white-space: nowrap; }
.sheet input { appearance: none; flex: none; width: 4px; height: 4px; margin: 0; border: 1px solid #333; background: #fff; }
.checks.halves > span { display: flex; flex-direction: column; align-items: flex-start; justify-content: center; padding-left: 3px; }
.checks.halves > .c { flex: 0 0 56%; }
.abroad { align-self: flex-start; flex: 1; height: 21px; border-bottom: 1px solid #b4b4b4; padding-left: 1px; }
.rowc { height: 45px; }
.rowc > .c { border-bottom: 0; }
.status { display: grid; grid-template-columns: 180fr 277fr; }
.status > * { min-width: 0; }
.status-left { flex-direction: column; border-bottom: 0; justify-content: space-between; }
.status-left > small { font-size: 4px; line-height: 6px; }
.status-main { display: grid; grid-template-columns: 28fr 113fr 39fr; align-self: stretch; }
.tickable { display: flex; align-items: center; gap: 2px; padding: 2px 0 0 3px; align-self: start; line-height: 7px; }
table { border-collapse: collapse; table-layout: fixed; width: 100%; margin-top: 1px; font-size: 4px; line-height: 4px; font-feature-settings: "palt"; }
th, td { height: 9px; padding: 0; border: 1px solid #b4b4b4; font-weight: normal; text-align: center; }
th:first-child { width: 32%; }
td .j { margin: auto; font-size: 4px; }
td .diag { height: 8px; }
.people { text-align: right; }
.statuses { display: flex; flex-direction: column; justify-content: space-around; padding: 0 2px; }
.statuses label { display: flex; align-items: center; gap: 3px; }
.detail { display: flex; flex-direction: column; }
.detail-head { display: grid; grid-template-columns: 228fr 49fr; height: 10px; }
.detail-head + .detail-head { height: 18px; }
.detail-head small { font-size: 4px; }
.detail b { font-size: 4px; line-height: 4px; padding-left: 3px; white-space: nowrap; font-feature-settings: "palt"; font-weight: 500; }

.others { display: grid; grid-template-columns: 50fr 457fr; height: 36px; }
.others > * { min-width: 0; }
.others .label { padding-left: 5px; gap: 3px; border-bottom: 0; }
.d-row { display: grid; grid-template-columns: 64fr 26fr 51fr 116fr 137fr 63fr; height: 14px; }
.d-row.entry { height: 11px; }
.d-row.entry:last-child > * { border-bottom: 0; }
.d-row > .tiny { font-size: 4px; font-feature-settings: "palt"; }
.tax-cols { display: grid; grid-template-columns: 49fr 26fr 62fr; }
.tax-cols > span { border-bottom: 0; display: flex; justify-content: center; align-items: center; }
.d-row .tax-cols > span { align-self: stretch; }
.d-row.entry .tax-cols { justify-content: stretch; }
.j.address { flex-basis: 70%; width: 70%; }

.side { display: flex; flex-direction: column; align-items: flex-start; padding-left: 6px; }
.seal { width: 29px; height: 29px; margin: -10px 0 0 5px; border: 1px solid #333; border-radius: 50%; text-align: center; color: #222; font-size: 14px; line-height: 26px; font-weight: bold; }
.guide { writing-mode: vertical-rl; height: 200px; margin: 48px 0 0 -6px; width: 44px; line-height: 6px; white-space: nowrap; color: #555; }
.guide span { display: block; }
.guide .full { height: 196px; text-align-last: justify; }
.guide .strong { font-weight: bold; color: #333; margin-right: 2px; }
.side > small { font-size: 4px; line-height: 6px; }
.qr { width: 38px; height: 38px; margin-top: 3px; }

.resident { height: 10px; padding-left: 23px; line-height: 10px; white-space: nowrap; color: #333; font-feature-settings: "palt"; }
.local { display: grid; grid-template-columns: 50fr 461fr 41fr; margin: 0 20px 0 19px; height: 80px; }
.local > * { min-width: 0; }
.l-label { display: grid; grid-template-rows: 39px 1fr; }
.l-label .c:last-child { align-items: flex-start; padding-top: 3px; }
.l-label b { width: 94%; }
.l-label .j { width: 100%; }
.l-row { display: grid; grid-template-columns: 66fr 104fr 14fr 37fr 101fr 53fr 35fr 51fr; height: 11px; }
.l-row.entry { height: 14px; }
.l-row.last { grid-template-columns: 66fr 104fr 14fr 37fr 71fr 67fr 35fr 16fr 51fr; height: 11px; }
.l-row .era { padding: 0 8px 0 3px; }
.l-row .two { font-size: 4px; line-height: 5px; }
.l-row .rel { font-feature-settings: "palt"; }
.l-row.last.entry .checks { flex-direction: column; align-items: flex-start; justify-content: flex-start; }
.l-row.last.entry .checks label { gap: 1px; line-height: 4px; }
.l-row.last.entry .era { align-items: flex-start; line-height: 4px; }
.l-side { padding: 9px 2px 0 3px; font-size: 4px; white-space: nowrap; }
.l-side p { height: 29px; line-height: 5px; }
.l-side .c { height: 11px; border: 1px solid #b4b4b4; }
</style>
